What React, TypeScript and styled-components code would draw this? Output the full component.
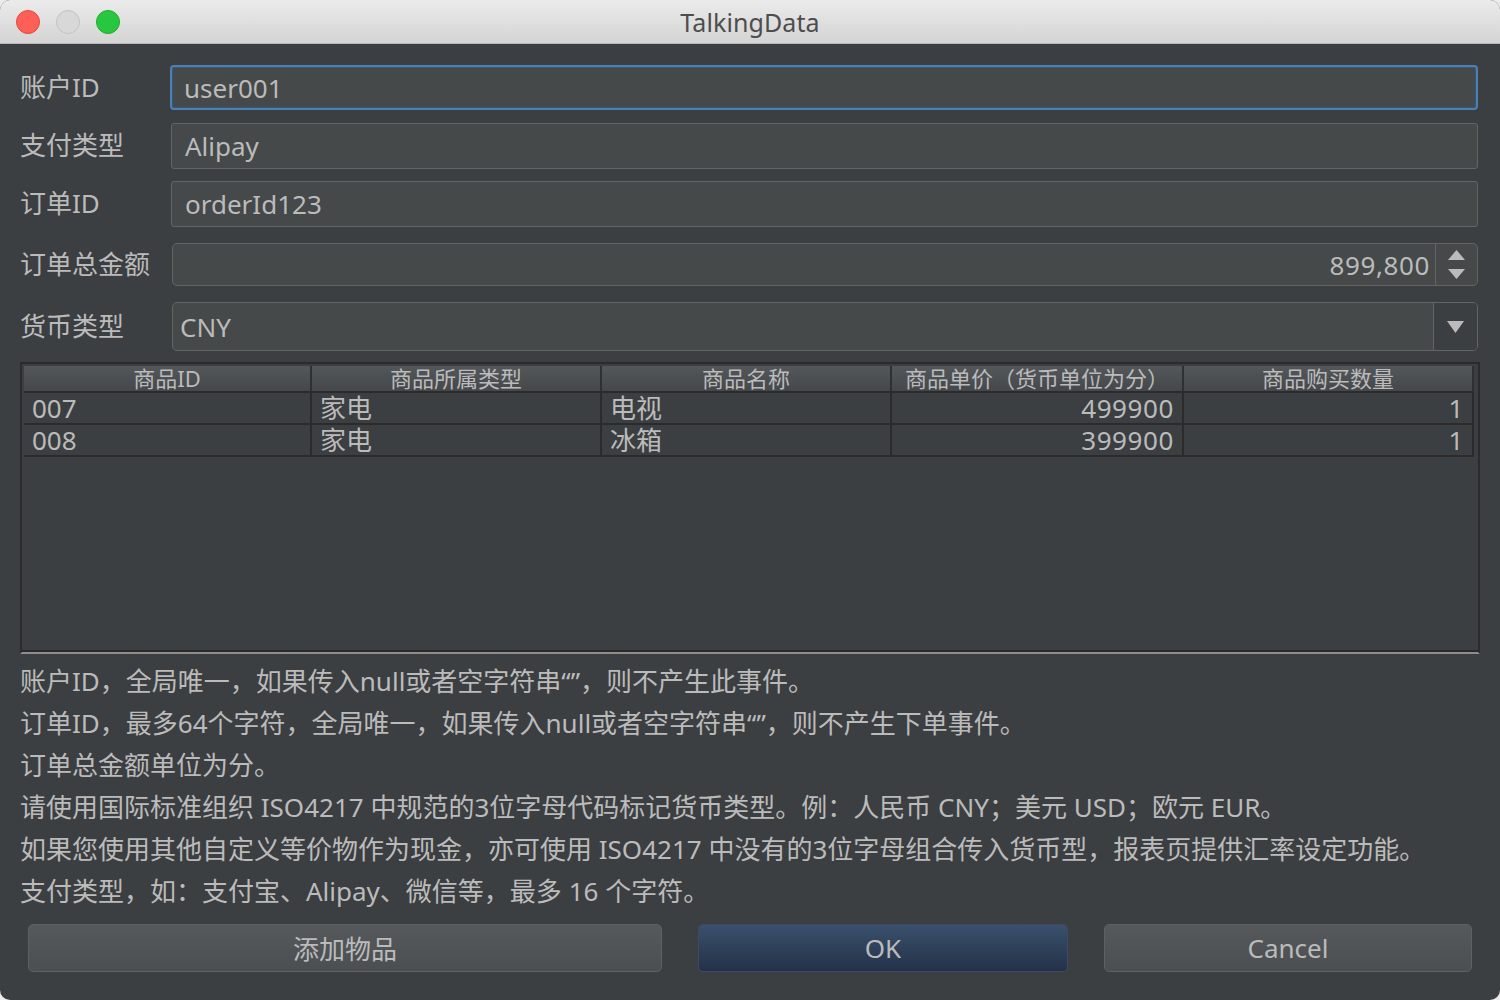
import React from "react";
import styled, { createGlobalStyle, css } from "styled-components";

const GlobalStyle = createGlobalStyle`
  html, body { margin: 0; padding: 0; background: #ececec; }
  body { font-family: "Noto Sans", "Noto Sans CJK SC", sans-serif; }
  * { box-sizing: border-box; }
`;

const FONT = `"Noto Sans", "Noto Sans CJK SC", sans-serif`;

const Window = styled.div`
  width: 1500px;
  height: 1000px;
  border-radius: 10px;
  overflow: hidden;
  background: #3c3f41;
  display: flex;
  flex-direction: column;
  font-family: ${FONT};
  color: #bbbbbb;
`;

const TitleBar = styled.div`
  height: 44px;
  flex: none;
  background: linear-gradient(#ebebeb, #d4d4d4);
  border-bottom: 1px solid #b9b9b9;
  display: grid;
  grid-template-columns: 1fr auto 1fr;
  align-items: center;
  padding: 0 16px;
`;

const Lights = styled.div`
  display: flex;
  gap: 16px;
`;

const Light = styled.span<{ $fill: string; $edge: string }>`
  width: 24px;
  height: 24px;
  border-radius: 50%;
  background: ${(p) => p.$fill};
  border: 1px solid ${(p) => p.$edge};
`;

const Title = styled.div`
  font-size: 25px;
  color: #4d4d4d;
  letter-spacing: 0.1px;
`;

const Content = styled.div`
  flex: 1;
  display: flex;
  flex-direction: column;
  padding: 0 20px;
`;

const Row = styled.div<{ $mt: number; $h: number }>`
  margin-top: ${(p) => p.$mt}px;
  height: ${(p) => p.$h}px;
  display: grid;
  grid-template-columns: 150px 1fr;
  align-items: center;
  padding-right: 2px;
`;

const Label = styled.div`
  font-size: 26px;
  line-height: 1.2;
  color: #bbbbbb;
`;

const Field = styled.div<{ $focused?: boolean; $inset?: number }>`
  height: 100%;
  margin-left: ${(p) => p.$inset ?? 0}px;
  background: #45494a;
  border: 1px solid #646464;
  border-radius: 3px;
  display: flex;
  align-items: center;
  padding-left: 13px;
  font-size: 26px;
  color: #bbbbbb;
  ${(p) =>
    p.$focused &&
    css`
      border: 2px solid #4d7fb3;
      box-shadow: inset 0 0 0 1px #36587d;
      border-radius: 4px;
      padding-left: 12px;
    `}
`;

const Spinner = styled.div`
  height: 100%;
  margin-left: 2px;
  background: #45494a;
  border: 1px solid #646464;
  border-radius: 5px;
  display: grid;
  grid-template-columns: 1fr 41px;
  font-size: 26px;
`;

const SpinValue = styled.div`
  display: flex;
  align-items: center;
  justify-content: flex-end;
  padding-right: 5px;
  border-right: 1px solid #646464;
  letter-spacing: 0.6px;
`;

const SpinArrows = styled.div`
  display: flex;
  flex-direction: column;
  align-items: center;
  justify-content: center;
  gap: 9px;
`;

const Combo = styled.div`
  height: 100%;
  margin-left: 2px;
  background: #45494a;
  border: 1px solid #646464;
  border-radius: 5px;
  display: grid;
  grid-template-columns: 1fr 43px;
  font-size: 26px;
  overflow: hidden;
`;

const ComboValue = styled.div`
  display: flex;
  align-items: center;
  padding-left: 7px;
  border-right: 1px solid #646464;
`;

const ComboButton = styled.div`
  background: #3c3f41;
  display: flex;
  align-items: center;
  justify-content: center;
`;

const TableBox = styled.div`
  margin-top: 11px;
  height: 292px;
  border: 2px solid #2b2b2b;
  border-bottom: 2px solid #8d8d8d;
  box-shadow: inset 0 -2px 0 #2b2b2b;
  padding: 2px 4px 0 2px;
  background: #3c3f41;
`;

const COLS = "288px 290px 290px 292px 290px";

const HeadRow = styled.div`
  display: grid;
  grid-template-columns: ${COLS};
  height: 27px;
  background: linear-gradient(#53575a, #45484b);
  border-bottom: 2px solid #2b2b2b;
`;

const HeadCell = styled.div`
  font-size: 22px;
  line-height: 25px;
  text-align: center;
  color: #bbbbbb;
  border-right: 2px solid #2e3133;
  white-space: nowrap;
`;

const BodyRow = styled.div`
  display: grid;
  grid-template-columns: ${COLS};
  height: 32px;
  border-bottom: 2px solid #2b2b2b;
`;

const Cell = styled.div<{ $right?: boolean }>`
  font-size: 26px;
  line-height: 30px;
  padding: 0 8px;
  text-align: ${(p) => (p.$right ? "right" : "left")};
  border-right: 2px solid #2b2b2b;
  color: #bbbbbb;
  white-space: nowrap;
  letter-spacing: ${(p) => (p.$right ? "0.6px" : "0")};
`;

const Notes = styled.div`
  margin-top: 6px;
  display: flex;
  flex-direction: column;
`;

const Note = styled.div`
  font-size: 26px;
  line-height: 42px;
  color: #bbbbbb;
  white-space: nowrap;
`;

const Buttons = styled.div`
  margin-top: 12px;
  display: grid;
  grid-template-columns: 634px 370px 368px;
  gap: 36px;
  padding-left: 8px;
`;

const Button = styled.button<{ $primary?: boolean }>`
  height: 48px;
  font-family: ${FONT};
  font-size: 26px;
  color: #bbbbbb;
  border-radius: 5px;
  border: 1px solid #5e6163;
  background: linear-gradient(#55595c, #4b4f52);
  padding: 0;
  ${(p) =>
    p.$primary &&
    css`
      border-color: #3a4b63;
      background: linear-gradient(#3a506c, #243248);
    `}
`;

const UpArrow = () => (
  <svg width="17" height="10" viewBox="0 0 17 10">
    <polygon points="8.5,0 17,10 0,10" fill="#bbbbbb" />
  </svg>
);
const DownArrow = () => (
  <svg width="17" height="10" viewBox="0 0 17 10">
    <polygon points="0,0 17,0 8.5,10" fill="#bbbbbb" />
  </svg>
);
const ComboArrow = () => (
  <svg width="17" height="12" viewBox="0 0 17 12">
    <polygon points="0,0 17,0 8.5,12" fill="#bbbbbb" />
  </svg>
);

const rows = [
  ["007", "家电", "电视", "499900", "1"],
  ["008", "家电", "冰箱", "399900", "1"],
];

const notes = [
  "账户ID，全局唯一，如果传入null或者空字符串“”，则不产生此事件。",
  "订单ID，最多64个字符，全局唯一，如果传入null或者空字符串“”，则不产生下单事件。",
  "订单总金额单位为分。",
  "请使用国际标准组织 ISO4217 中规范的3位字母代码标记货币类型。例：人民币 CNY；美元 USD；欧元 EUR。",
  "如果您使用其他自定义等价物作为现金，亦可使用 ISO4217 中没有的3位字母组合传入货币型，报表页提供汇率设定功能。",
  "支付类型，如：支付宝、Alipay、微信等，最多 16 个字符。",
];

export default function App() {
  return (
    <>
      <GlobalStyle />
      <Window>
        <TitleBar>
          <Lights>
            <Light $fill="#fe5f57" $edge="#e1483f" />
            <Light $fill="#d8d8d8" $edge="#c2c2c2" />
            <Light $fill="#29c740" $edge="#1eac2e" />
          </Lights>
          <Title>TalkingData</Title>
          <div />
        </TitleBar>
        <Content>
          <Row $mt={21} $h={45}>
            <Label>账户ID</Label>
            <Field $focused>user001</Field>
          </Row>
          <Row $mt={13} $h={46}>
            <Label>支付类型</Label>
            <Field $inset={1}>Alipay</Field>
          </Row>
          <Row $mt={12} $h={46}>
            <Label>订单ID</Label>
            <Field $inset={1}>orderId123</Field>
          </Row>
          <Row $mt={16} $h={43}>
            <Label>订单总金额</Label>
            <Spinner>
              <SpinValue>899,800</SpinValue>
              <SpinArrows>
                <UpArrow />
                <DownArrow />
              </SpinArrows>
            </Spinner>
          </Row>
          <Row $mt={16} $h={49}>
            <Label>货币类型</Label>
            <Combo>
              <ComboValue>CNY</ComboValue>
              <ComboButton>
                <ComboArrow />
              </ComboButton>
            </Combo>
          </Row>
          <TableBox>
            <HeadRow>
              <HeadCell>商品ID</HeadCell>
              <HeadCell>商品所属类型</HeadCell>
              <HeadCell>商品名称</HeadCell>
              <HeadCell>商品单价（货币单位为分）</HeadCell>
              <HeadCell>商品购买数量</HeadCell>
            </HeadRow>
            {rows.map((r) => (
              <BodyRow key={r[0]}>
                <Cell>{r[0]}</Cell>
                <Cell>{r[1]}</Cell>
                <Cell>{r[2]}</Cell>
                <Cell $right>{r[3]}</Cell>
                <Cell $right>{r[4]}</Cell>
              </BodyRow>
            ))}
          </TableBox>
          <Notes>
            {notes.map((n) => (
              <Note key={n}>{n}</Note>
            ))}
          </Notes>
          <Buttons>
            <Button>添加物品</Button>
            <Button $primary>OK</Button>
            <Button>Cancel</Button>
          </Buttons>
        </Content>
      </Window>
    </>
  );
}
